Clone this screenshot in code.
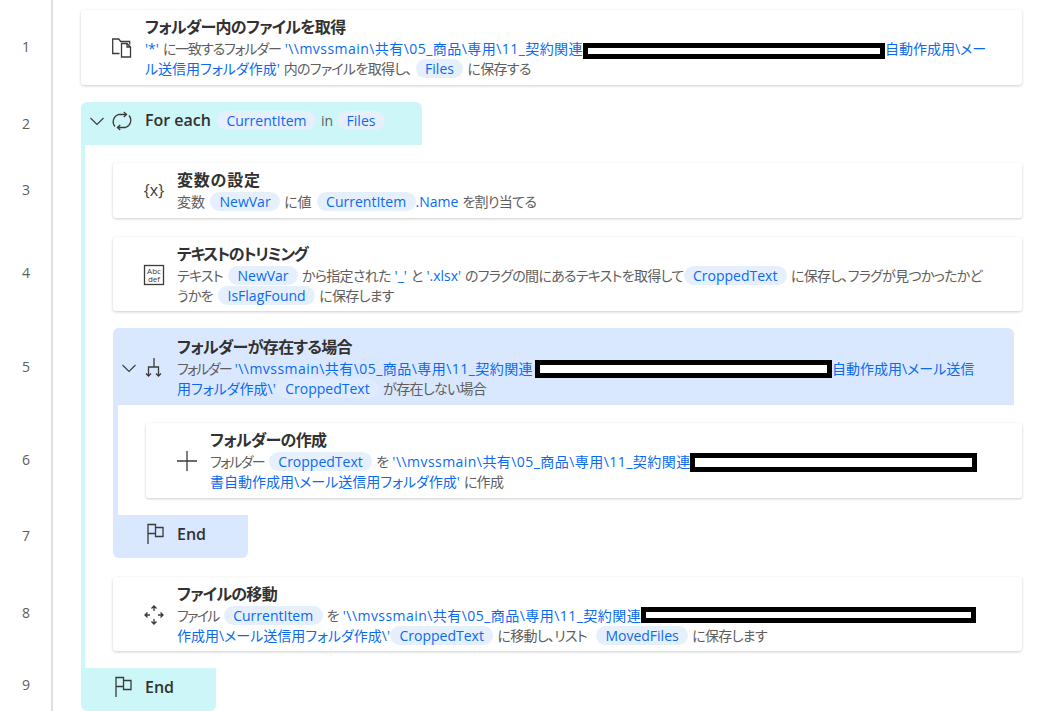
<style>
  :global(body) {
    margin: 0;
    background: #fff;
    overflow: hidden;
  }

  .flow {
    height: 711px;
    overflow: hidden;
    padding-top: 1px;
    box-sizing: border-box;
    font-family: "Open Sans", "Noto Sans CJK JP", sans-serif;
    font-size: 14px;
    line-height: 20px;
    color: #605e5c;
    font-feature-settings: "palt";
    background: linear-gradient(#e1dfdd, #e1dfdd) 51px 0 / 2px 100% no-repeat;
  }

  .row {
    display: flex;
  }

  .num {
    flex: none;
    width: 52px;
    box-sizing: border-box;
    display: flex;
    align-items: center;
    justify-content: center;
    color: #605e5c;
  }

  .cell {
    flex: 1;
    min-width: 0;
    margin: 0 26px 0 29px;
    display: flow-root;
  }

  .loop {
    display: flow-root;
    border-left: 4px solid #cdf6f8;
    padding-left: 28px;
  }

  .cond {
    display: flow-root;
    border-left: 5px solid #d9e8fe;
    padding-left: 28px;
  }

  .stem {
    height: 9px;
    box-sizing: border-box;
  }

  .card {
    display: flex;
    align-items: center;
    margin: 9px 0 8px;
    padding: 7px 12px 6px 31px;
    background: #fff;
    border-radius: 3px;
    box-shadow: 0 1px 3px rgba(0, 0, 0, 0.2);
  }

  .loose {
    margin-top: 11px;
    padding-bottom: 5px;
  }

  .head {
    display: flex;
    align-items: center;
    margin-top: 9px;
    border-radius: 6px 6px 0 0;
  }

  .head.end {
    margin-top: 0;
    border-radius: 0 0 6px 6px;
    height: 43px;
    width: 135px;
    padding: 0 0 5px 31px;
    box-sizing: border-box;
  }

  .blue.end {
    margin-bottom: 8px;
  }

  .foreach {
    width: 341px;
    height: 43px;
    padding-bottom: 6px;
    box-sizing: border-box;
    background: #cdf6f8;
  }

  .ifhead {
    margin: 9px 8px 0 0;
    padding: 9px 0 6px;
    background: #d9e8fe;
  }

  .end.cyan {
    background: #cdf6f8;
  }

  .end.blue {
    background: #d9e8fe;
  }

  .chev {
    flex: none;
    width: 31px;
    display: flex;
    justify-content: center;
  }

  .icon {
    flex: none;
    width: 20px;
    height: 20px;
    margin-right: 13px;
    fill: none;
    stroke: #3b3a39;
    stroke-width: 1.3;
    overflow: visible;
  }

  .title {
    font-size: 16px;
    line-height: 21px;
    font-weight: 600;
    color: #323130;
    margin-bottom: 1px;
    letter-spacing: -0.7px;
  }

  .title.kana {
    letter-spacing: -1.4px;
  }

  .title.kanji {
    letter-spacing: 0.8px;
  }

  .title.solo {
    margin: 0 6px 0 0;
    letter-spacing: 0;
  }

  .line {
    white-space: nowrap;
    letter-spacing: -0.7px;
    word-spacing: 1px;
  }

  /* short katakana labels sit tighter than the sentence text */
  .kn {
    letter-spacing: -1.7px;
  }

  .tight {
    letter-spacing: -1.1px;
  }

  .wide {
    letter-spacing: 0;
  }

  .s {
    color: #0b6af0;
    letter-spacing: 0;
  }

  /* the long folder path runs a bit wider than the rest */
  .path {
    letter-spacing: 0.45px;
  }

  .v {
    display: inline-block;
    height: 19px;
    line-height: 19px;
    padding: 0 9.5px;
    margin: 0 4px 0 5px;
    border-radius: 10px;
    background: #e6f0fd;
    color: #0b6af0;
    vertical-align: top;
    letter-spacing: 0;
  }

  .s + .v {
    margin-left: 0;
  }

  .v:has(+ .s) {
    margin-right: 0;
  }

  .head > .v {
    margin: 0;
  }

  .in {
    margin: 0 4px 0 5px;
  }

  .ifhead .v {
    background: #dfebff;
  }

  /* redacted parts of the path */
  .r {
    display: inline-block;
    box-sizing: border-box;
    border: 5px solid #000;
    background: #fff;
    vertical-align: top;
  }
</style>

<div class="flow">
  <div class="row">
    <div class="num">1</div>
    <div class="cell">
      <div class="card">
        <svg class="icon" viewBox="0 0 20 20"><path d="M7.500 15.500H.7V1h6l2 2.500h9v3"/><path d="M9.500 5.500H15L18.500 9v10h-9z"/><path d="M15 5.500V9h3.500"/></svg>
        <div>
          <div class="title">フォルダー内のファイルを取得</div>
          <div class="line"><span class="s">'*'</span> <span class="tight">に一致するフォルダー</span> <span class="s path">'\\mvssmain\共有\05_商品\専用\11_契約関連</span><span class="r" style="width: 302px; height: 16px; margin-top: 4px"></span><span class="s">自動作成用\メー</span></div>
          <div class="line"><span class="s">ル送信用フォルダ作成'</span> 内のファイルを取得し、 <span class="v">Files</span>に保存する</div>
        </div>
      </div>
    </div>
  </div>

  <div class="row">
    <div class="num">2</div>
    <div class="cell">
      <div class="head foreach">
        <div class="chev"><svg width="14" height="14" viewBox="0 0 14 14" fill="none" stroke="#3b3a39" stroke-width="1.1"><path d="M.5 4 7 10.500 13.500 4"/></svg></div>
        <svg class="icon" viewBox="0 0 20 20"><path d="M3 15.500A7.500 7.500 0 0 1 6.500 3.500h8"/><path d="M11.800 1l2.700 2.500-2.700 2.500"/><path d="M17 4.500A7.500 7.500 0 0 1 13.500 16.500h-8"/><path d="M8.200 14l-2.700 2.500L8.200 19"/></svg>
        <div class="title solo">For each</div>
        <span class="v">CurrentItem</span>
        <span class="in">in</span>
        <span class="v">Files</span>
      </div>
      <div class="stem loop"></div>
    </div>
  </div>

  <div class="row">
    <div class="num">3</div>
    <div class="cell">
      <div class="loop">
        <div class="card">
          <svg class="icon" viewBox="0 0 20 20"><text x="10" y="15" text-anchor="middle" font-size="16" fill="#3b3a39" stroke="none" font-family="Open Sans">&#123;x&#125;</text></svg>
          <div>
            <div class="title kanji">変数の設定</div>
            <div class="line"><span class="wide">変数</span><span class="v">NewVar</span><span class="wide">に値</span><span class="v">CurrentItem</span><span class="s">.Name</span> を割り当てる</div>
          </div>
        </div>
      </div>
    </div>
  </div>

  <div class="row">
    <div class="num">4</div>
    <div class="cell">
      <div class="loop">
        <div class="card loose">
          <svg class="icon" viewBox="0 0 20 20"><rect x="0.5" y="0.5" width="19" height="19"/><text x="10" y="8.500" text-anchor="middle" font-size="8" fill="#3b3a39" stroke="none" font-family="Open Sans">Abc</text><text x="10" y="16.500" text-anchor="middle" font-size="8" fill="#3b3a39" stroke="none" font-family="Open Sans">def</text></svg>
          <div>
            <div class="title kana">テキストのトリミング</div>
            <div class="line">テキスト<span class="v">NewVar</span> から指定された <span class="s">'_'</span> と <span class="s">'.xlsx'</span> のフラグの間にあるテキストを取得して<span class="v">CroppedText</span>に保存し、フラグが見つかったかど</div>
            <div class="line">うかを<span class="v">IsFlagFound</span>に保存します</div>
          </div>
        </div>
      </div>
    </div>
  </div>

  <div class="row">
    <div class="num">5</div>
    <div class="cell">
      <div class="loop">
        <div class="head ifhead">
          <div class="chev"><svg width="14" height="14" viewBox="0 0 14 14" fill="none" stroke="#3b3a39" stroke-width="1.1"><path d="M.5 4 7 10.500 13.500 4"/></svg></div>
          <svg class="icon" viewBox="0 0 20 20"><path d="M10 0v9M4.500 18V9h10v9"/><path d="M2 15.500 4.500 18 7 15.500M12 15.500 14.500 18 17 15.500"/></svg>
          <div>
            <div class="title">フォルダーが存在する場合</div>
            <div class="line"><span class="kn">フォルダー</span> <span class="s path">'\\mvssmain\共有\05_商品\専用\11_契約関連</span><span class="r" style="width: 297px; height: 18px; margin: 1px 0 0 2px"></span><span class="s">自動作成用\メール送信</span></div>
            <div class="line"><span class="s">用フォルダ作成\'</span><span class="v">CroppedText</span>が存在しない場合</div>
          </div>
        </div>
        <div class="stem cond"></div>
      </div>
    </div>
  </div>

  <div class="row">
    <div class="num">6</div>
    <div class="cell">
      <div class="loop">
        <div class="cond">
          <div class="card">
            <svg class="icon" viewBox="0 0 20 20"><path d="M0 10h20M10 0v20"/></svg>
            <div>
              <div class="title">フォルダーの作成</div>
              <div class="line"><span class="kn">フォルダー</span><span class="v">CroppedText</span> を <span class="s path">'\\mvssmain\共有\05_商品\専用\11_契約関連</span><span class="r" style="width: 287px; height: 19px; margin: 1px 0 0 -1px"></span></div>
              <div class="line"><span class="s">書自動作成用\メール送信用フォルダ作成'</span> に作成</div>
            </div>
          </div>
        </div>
      </div>
    </div>
  </div>

  <div class="row">
    <div class="num">7</div>
    <div class="cell">
      <div class="loop">
        <div class="stem cond"></div>
        <div class="head end blue">
          <svg class="icon" viewBox="0 0 20 20"><path d="M4 20V.5h7.500v3H19v9h-7.500v-3H4M11.500 3.500v6"/></svg>
          <div class="title solo">End</div>
        </div>
      </div>
    </div>
  </div>

  <div class="row">
    <div class="num">8</div>
    <div class="cell">
      <div class="loop">
        <div class="card loose">
          <svg class="icon" viewBox="0 0 20 20"><path d="M10 1v5M7.500 3.500 10 1l2.500 2.500M10 19v-5M7.500 16.500 10 19l2.500-2.500M1 10h5M3.500 7.500 1 10l2.500 2.500M19 10h-5M16.500 7.500 19 10l-2.500 2.500"/></svg>
          <div>
            <div class="title">ファイルの移動</div>
            <div class="line"><span class="kn">ファイル</span><span class="v">CurrentItem</span> を <span class="s path">'\\mvssmain\共有\05_商品\専用\11_契約関連</span><span class="r" style="width: 335px; height: 16px; margin-top: 1px"></span></div>
            <div class="line"><span class="s">作成用\メール送信用フォルダ作成\'</span><span class="v">CroppedText</span>に移動し、リスト <span class="v">MovedFiles</span>に保存します</div>
          </div>
        </div>
      </div>
    </div>
  </div>

  <div class="row">
    <div class="num">9</div>
    <div class="cell">
      <div class="stem loop"></div>
      <div class="head end cyan">
        <svg class="icon" viewBox="0 0 20 20"><path d="M4 20V.5h7.500v3H19v9h-7.500v-3H4M11.500 3.500v6"/></svg>
        <div class="title solo">End</div>
      </div>
    </div>
  </div>
</div>
